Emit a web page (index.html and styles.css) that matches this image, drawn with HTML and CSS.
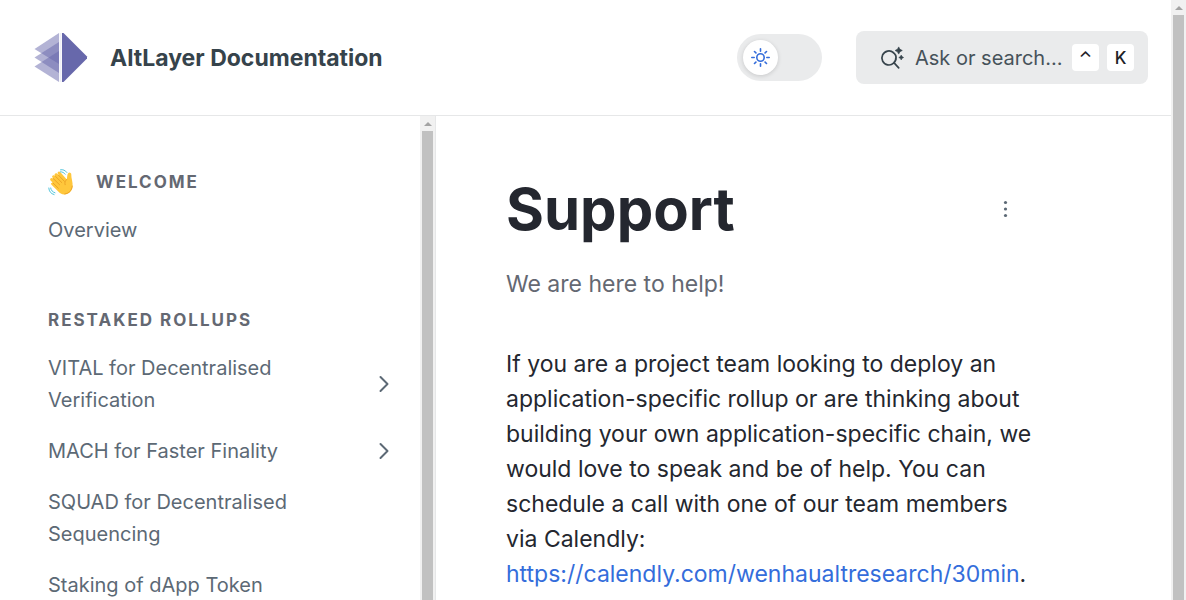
FILE: index.html
```html
<!DOCTYPE html>
<html lang="en">
<head>
<meta charset="utf-8">
<meta name="viewport" content="width=device-width, initial-scale=1">
<title>Support | AltLayer Documentation</title>
<link rel="stylesheet" href="styles.css">
</head>
<body>
<div class="window">
  <div class="page">
    <header class="header">
      <a class="brand" href="#">
        <svg class="logo" viewBox="0 0 56 52" aria-hidden="true">
          <g fill="#6768ab" fill-opacity=".5">
            <path d="M27 1v31L2.500 17z"/>
            <path d="M27 10v31L2.500 25.500z"/>
            <path d="M27 19v31L2.500 34.500z"/>
          </g>
          <path fill="#f0f0f7" d="M27.500 1h2v49h-2z"/>
          <path fill="#6768ab" d="M30 1h1.500L55 24.500v2L31.500 50H30z"/>
        </svg>
        <span>AltLayer Documentation</span>
      </a>
      <div class="tools">
        <button class="theme" type="button" aria-label="Toggle theme">
          <span class="knob">
            <svg class="sun" viewBox="0 0 20 20" aria-hidden="true">
              <circle cx="9.500" cy="9.500" r="3.700"/>
              <path d="M9.500.8v2.400M9.500 15.800v2.400M.8 9.500h2.400M15.800 9.500h2.400M3.500 3.500l1.400 1.400M14.100 14.100l1.400 1.400M3.500 15.500l1.400-1.400M14.100 4.900l1.400-1.400"/>
            </svg>
          </span>
        </button>
        <button class="search" type="button">
          <svg class="search-icon" viewBox="0 0 24 24" aria-hidden="true">
            <path class="lens" d="M13.500 6.700A7 7 0 1 0 15.900 11.500M14.800 17.700l3.900 4.200M12.800 6.300a7 7 0 0 1 3.100 7.500"/>
            <path class="spark" d="M18.700.9q.7 2.900 3.600 3.600-2.900.7-3.600 3.600-.7-2.900-3.600-3.600 2.900-.7 3.600-3.600zM21.200 9.100q.5 1.900 2.400 2.400-1.900.5-2.400 2.400-.5-1.900-2.400-2.400 1.900-.5 2.400-2.400z"/>
          </svg>
          <span class="search-label">Ask or search…</span>
          <kbd>⌃</kbd><kbd>K</kbd>
        </button>
      </div>
    </header>
    <div class="columns">
      <aside class="sidebar">
        <nav class="nav">
          <section class="group">
            <h2 class="group-title">
              <svg class="wave" viewBox="0 0 26 28" aria-hidden="true">
                <path fill="#ffc73c" d="M2.500 10.500c.8-1 2-.6 2.800.1l-1-1.300c-.8-1.200.8-2.900 2.200-1.800l1 .9-.7-1c-.9-1.600 1-3 2.300-1.800l1.700 1.700-1-1.700c-.7-1.600 1.200-2.800 2.400-1.500l6.600 7.300c.5-2.500.3-5.200 1.500-6.500 1.200-1.200 3.200-.2 3 1.800-.3 3.200 1.900 7.300 1.200 12.300-.7 4.600-4.200 7.500-8.200 7.500-2.600 0-4.600-1.400-6.500-3.400l-6.300-6.400c-1.300-1.400.3-2.600 1.500-1.700L2.600 12.600c-.6-.7-.6-1.500-.1-2.100z"/>
                <path fill="none" stroke="#e79a21" stroke-width=".8" stroke-linecap="round" d="M5.300 10.600l6.300 6.200M7.500 8.400l6.300 6.200M10.600 7.300l5.800 6M5 15l5.300 5.200M18.800 11.400c-1.700 1.300-2.400 3-1.700 5.300M24.300 18c-.5 4.500-3 7.200-7.500 8"/>
                <path fill="none" stroke="#53c5dc" stroke-width="1" stroke-linecap="round" d="M12.500 1.800c2.500-.5 4.700.4 6.400 2.700M12.500 3.800c2 0 3.500.8 4.700 2.400M.8 20c.2 3.400 2 5.700 5.300 6.600M2.700 20c.3 2.400 1.800 4 4.300 4.800"/>
              </svg>
              <span>Welcome</span>
            </h2>
            <a class="link" href="#"><span>Overview</span></a>
          </section>
          <section class="group">
            <h2 class="group-title">Restaked Rollups</h2>
            <a class="link" href="#"><span>VITAL for Decentralised Verification</span>
              <svg class="chevron" viewBox="0 0 10 18" aria-hidden="true"><path d="M1.500 2l7 7-7 7"/></svg></a>
            <a class="link" href="#"><span>MACH for Faster Finality</span>
              <svg class="chevron" viewBox="0 0 10 18" aria-hidden="true"><path d="M1.500 2l7 7-7 7"/></svg></a>
            <a class="link" href="#"><span>SQUAD for Decentralised Sequencing</span></a>
            <a class="link" href="#"><span>Staking of dApp Token</span></a>
          </section>
        </nav>
        <div class="scrollbar" aria-hidden="true"><span class="arrow"></span><span class="thumb"></span></div>
      </aside>
      <main class="content">
        <div class="title-row">
          <h1>Support</h1>
          <button class="more" type="button" aria-label="More options">
            <svg viewBox="0 0 4 18" aria-hidden="true"><circle cx="2.500" cy="2.500" r="1.600"/><circle cx="2.500" cy="9" r="1.600"/><circle cx="2.500" cy="15.500" r="1.600"/></svg>
          </button>
        </div>
        <p class="lead">We are here to help!</p>
        <p class="text">If you are a project team looking to deploy an application-specific rollup or are thinking about building your own application-specific chain, we would love to speak and be of help. You can schedule a call with one of our team members via Calendly: <a href="#">https://calendly.com/wenhaualtresearch/30min</a>.</p>
      </main>
    </div>
  </div>
  <div class="scrollbar" aria-hidden="true"><span class="arrow"></span><span class="thumb"></span></div>
</div>
</body>
</html>
```
FILE: styles.css
```css
* { box-sizing: border-box; }
body {
  margin: 0;
  background: #fff;
  color: #24272f;
  font-family: Inter, "Liberation Sans", sans-serif;
}
h1, h2, p { margin: 0; }
a { text-decoration: none; }
button { border: 0; font: inherit; cursor: pointer; }

.window { display: flex; height: 100vh; overflow: hidden; }
.page { flex: 1; min-width: 0; display: flex; flex-direction: column; }

.header {
  flex: none;
  display: flex;
  align-items: center;
  justify-content: space-between;
  padding: 31px 23px 31px 32px;
  border-bottom: 1px solid #e6e7e8;
}
.brand {
  display: flex;
  align-items: center;
  gap: 22px;
  color: #36434b;
  font-size: 23px;
  font-weight: 700;
  line-height: 32px;
}
.logo { width: 56px; height: 52px; }
.tools { display: flex; align-items: center; gap: 34px; }
.theme {
  display: flex;
  align-items: center;
  width: 85px;
  height: 47px;
  padding: 6px;
  border-radius: 24px;
  background: #eaebec;
}
.knob {
  display: grid;
  place-items: center;
  width: 35px;
  height: 35px;
  border-radius: 50%;
  background: #fff;
  box-shadow: 0 1px 4px rgba(0, 0, 0, .15);
}
.sun {
  width: 20px;
  height: 20px;
  fill: none;
  stroke: #346ddb;
  stroke-width: 1.6;
  stroke-linecap: round;
}
.search {
  display: flex;
  align-items: center;
  width: 292px;
  height: 53px;
  padding: 0 14px 0 24px;
  border-radius: 8px;
  background: #eaebec;
  color: #46525a;
  font-size: 20px;
}
.search-icon { width: 24px; height: 24px; margin-right: 11px; }
.lens { fill: none; stroke: #36434b; stroke-width: 1.7; stroke-linecap: round; }
.spark { fill: #36434b; stroke: #36434b; stroke-width: .6; }
.search-label { flex: 1; text-align: left; white-space: nowrap; }
kbd {
  width: 27px;
  height: 27px;
  margin-left: 8px;
  border-radius: 4px;
  background: #fff;
  color: #1d2126;
  font: 500 17px/28px Inter, "Liberation Sans", sans-serif;
}

.columns { flex: 1; min-height: 0; display: flex; }
.sidebar {
  flex: none;
  display: flex;
  width: 436px;
  border-right: 1px solid #e6e7e8;
}
.nav { flex: 1; overflow: hidden; padding: 50px 28px 0 48px; }
.group { margin-bottom: 57px; }
.group-title {
  display: flex;
  align-items: center;
  gap: 22px;
  height: 32px;
  color: #646872;
  font-size: 17px;
  font-weight: 700;
  letter-spacing: 2px;
  text-transform: uppercase;
}
.wave { width: 26px; height: 28px; }
.link {
  display: flex;
  align-items: center;
  justify-content: space-between;
  gap: 64px;
  margin-top: 16px;
  color: #5c6975;
  font-size: 20px;
  line-height: 32px;
}
.link + .link { margin-top: 19px; }
.group:first-child { margin-bottom: 58px; }
.chevron {
  flex: none;
  width: 10px;
  height: 18px;
  margin-right: 3px;
  fill: none;
  stroke: #5c6975;
  stroke-width: 2;
  stroke-linecap: round;
  stroke-linejoin: round;
}

.content { flex: 1; min-width: 0; padding: 56px 138px 0 70px; }
.title-row { display: flex; align-items: center; justify-content: space-between; }
h1 { font-size: 58px; font-weight: 700; line-height: 74px; }
.more {
  display: grid;
  place-items: center;
  width: 32px;
  height: 32px;
  margin-right: 12px;
  padding: 0;
  background: none;
}
.more svg { width: 4px; height: 18px; overflow: visible; fill: #5c6975; }
.lead { margin-top: 21px; color: #646872; font-size: 23px; line-height: 35px; }
.text { margin-top: 45px; font-size: 23px; line-height: 35px; }
.text a { color: #346ddb; }

.scrollbar {
  flex: none;
  display: flex;
  flex-direction: column;
  align-items: center;
  width: 15px;
  background: #f1f1f1;
}
.arrow {
  margin: 6px 0 5px;
  border: 4px solid transparent;
  border-top: 0;
  border-bottom-color: #a3a3a3;
}
.thumb { flex: 1; width: 11px; background: #c1c1c1; }
```
